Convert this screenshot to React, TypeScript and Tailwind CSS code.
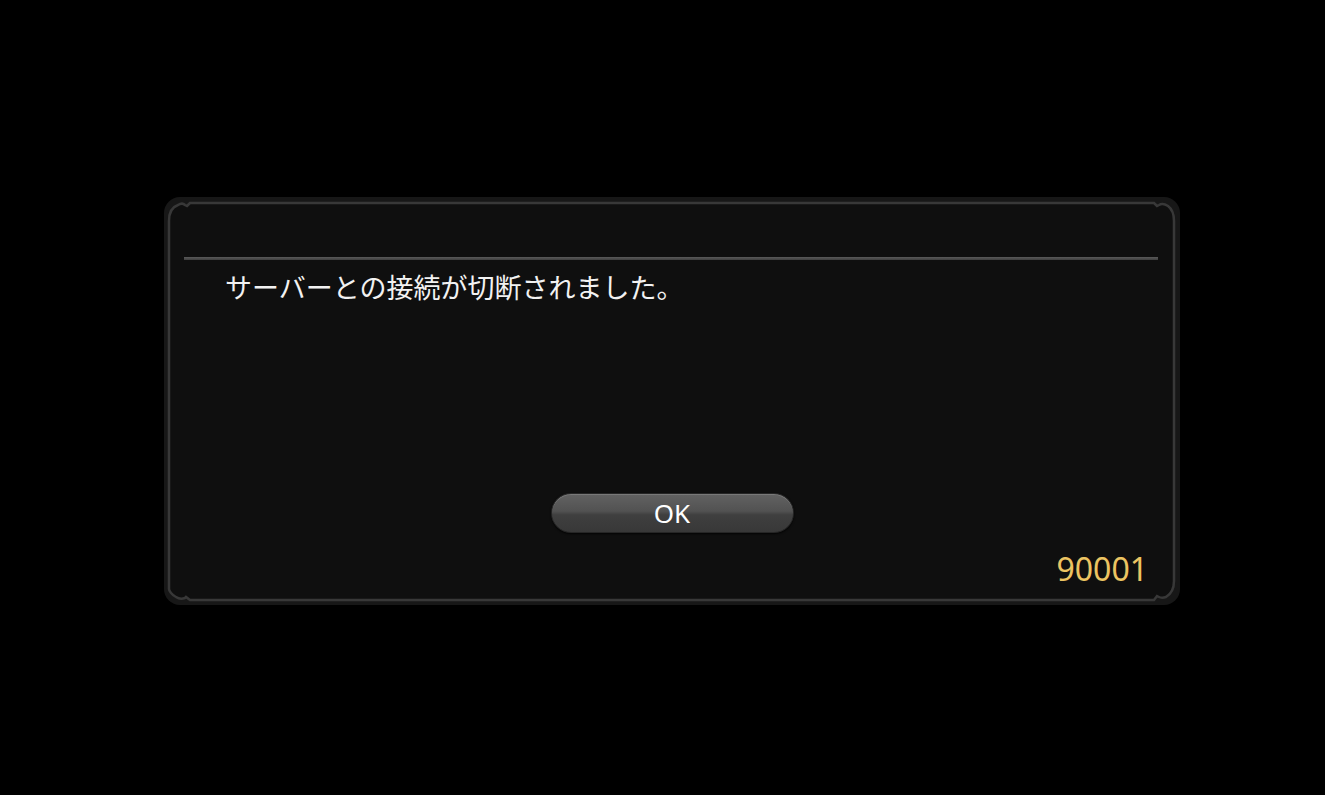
import React from "react";

function Frame() {
  const d =
    "M5,392 L5,24 C5,16 8,10 14,8 C17,6 19,6 21,8 L23,9 L26,6 L990,6 L993,9 L995,8 C998,6 1001,7 1004,9 C1008,12 1010,17 1010,24 L1010,384 C1010,391 1007,397 1002,400 C999,401 997,401 995,400 L993,399 L990,403 L26,403 L22,400 L21,401 C18,402 15,402 12,400 C8,398 5,394 5,392 Z";
  return (
    <svg
      className="absolute inset-0"
      width="1016"
      height="408"
      viewBox="0 0 1016 408"
      fill="none"
    >
      <rect x="0" y="0" width="1016" height="408" rx="16" fill="#171717" />
      <path d={d} fill="#0f0f0f" stroke="#383838" strokeWidth="2.5" />
    </svg>
  );
}

export default function App() {
  return (
    <div className="w-[1325px] h-[795px] bg-black pl-[164px] pt-[197px]">
      <div className="relative w-[1016px] h-[408px]">
        <Frame />
        <div className="relative flex flex-col h-full">
          <div className="mt-[60px] ml-[20px] w-[974px] h-[3px] bg-[linear-gradient(#5a5a5a,#3e3e3e)]" />
          <div
            className="mt-[9px] pl-[61px] text-[27px] leading-[36px] text-[#f2f2f2]"
            style={{ fontFamily: '"Noto Sans CJK JP", "Noto Sans", sans-serif' }}
          >
            サーバーとの接続が切断されました。
          </div>
          <button
            className="self-center mt-[188px] w-[243px] h-[40px] rounded-full border border-[#262626] bg-[linear-gradient(#626262_0%,#525252_45%,#3f3f3f_55%,#383838_100%)] shadow-[inset_0_1px_0_rgba(255,255,255,0.15),0_1px_2px_rgba(0,0,0,0.8)] text-white text-[26px] leading-[38px] flex items-center justify-center"
            style={{ fontFamily: '"Noto Sans", "Open Sans", sans-serif' }}
          >
            OK
          </button>
          <div
            className="self-end mt-[16px] pr-[32px] text-[32px] leading-[40px] text-[#ecc462]"
            style={{ fontFamily: '"Noto Sans", "Open Sans", sans-serif' }}
          >
            90001
          </div>
        </div>
      </div>
    </div>
  );
}
